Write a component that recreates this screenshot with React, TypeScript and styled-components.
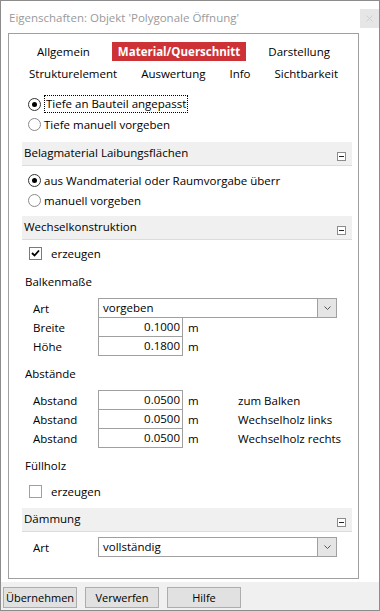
import React from "react";
import styled, { createGlobalStyle } from "styled-components";

const GlobalStyle = createGlobalStyle`
  html, body {
    margin: 0;
    padding: 0;
    background: #fff;
  }
  body {
    font-family: "Open Sans", "Noto Sans", sans-serif;
    font-size: 11.5px;
    color: #000;
  }
`;

const Window = styled.div`
  width: 380px;
  height: 611px;
  box-sizing: border-box;
  border: 1px solid #8c8c8c;
  background: #fff;
  display: flex;
  flex-direction: column;
`;

const TitleBar = styled.div`
  height: 32px;
  display: flex;
  justify-content: space-between;
  align-items: flex-start;
  padding-left: 8px;
`;

const Title = styled.div`
  color: #9a9a9a;
  font-size: 11.5px;
  line-height: 19px;
  margin-top: 7px;
`;

const CloseBtn = styled.div`
  width: 19px;
  height: 19px;
  margin-top: 8px;
  background: #e6e6e6;
  display: flex;
  align-items: center;
  justify-content: center;
`;

const Panel = styled.div`
  width: 351px;
  height: 546px;
  box-sizing: border-box;
  margin-left: 7px;
  border: 1px solid #a0a0a0;
  display: flex;
  flex-direction: column;
`;

const Tabs = styled.div`
  padding-top: 8px;
  display: flex;
  flex-direction: column;
  gap: 3px;
`;

const TabRow = styled.div<{ $gap: number }>`
  display: flex;
  justify-content: center;
  gap: ${(p) => p.$gap}px;
`;

const Tab = styled.div<{ $active?: boolean }>`
  height: 19px;
  line-height: 19px;
  padding: 0 6px;
  white-space: nowrap;
  background: ${(p) => (p.$active ? "#cd3237" : "transparent")};
  color: ${(p) => (p.$active ? "#fff" : "#000")};
  font-weight: ${(p) => (p.$active ? 700 : 400)};
`;

const Content = styled.div`
  padding: 11px 6px 0 13px;
  display: flex;
  flex-direction: column;
`;

const Block = styled.div<{ $mt?: number }>`
  margin-top: ${(p) => p.$mt ?? 0}px;
  display: flex;
  flex-direction: column;
`;

const OptionRow = styled.div<{ $indent?: number; $gap?: number }>`
  height: 20px;
  display: flex;
  align-items: center;
  padding-left: ${(p) => p.$indent ?? 6}px;
  gap: ${(p) => p.$gap ?? 3}px;
  white-space: nowrap;
`;

const Radio = styled.span<{ $on?: boolean }>`
  width: 13px;
  height: 13px;
  box-sizing: border-box;
  border-radius: 50%;
  border: 1px solid ${(p) => (p.$on ? "#333" : "#8a8a8a")};
  background: #fff;
  display: flex;
  align-items: center;
  justify-content: center;
  flex-shrink: 0;
  &::after {
    content: "";
    display: ${(p) => (p.$on ? "block" : "none")};
    width: 5px;
    height: 5px;
    border-radius: 50%;
    background: #000;
  }
`;

const Focused = styled.span`
  border: 1px dotted #000;
  padding: 0 1px;
  line-height: 16px;
`;

const CheckBox = styled.span<{ $on?: boolean }>`
  width: 13px;
  height: 13px;
  box-sizing: border-box;
  border: 1px solid ${(p) => (p.$on ? "#7a7a7a" : "#a0a0a0")};
  background: #fff;
  display: flex;
  align-items: center;
  justify-content: center;
  flex-shrink: 0;
`;

const Header = styled.div<{ $mt?: number }>`
  margin-top: ${(p) => p.$mt ?? 0}px;
  height: 24px;
  box-sizing: border-box;
  background: #f0f0f0;
  border-bottom: 1px solid #dcdcdc;
  display: flex;
  justify-content: space-between;
  padding-left: 2px;
  padding-right: 6px;
`;

const HeaderText = styled.span`
  line-height: 22px;
`;

const Collapse = styled.span`
  align-self: flex-end;
  margin-bottom: 4px;
  width: 9px;
  height: 9px;
  box-sizing: border-box;
  border: 1px solid #8c8c8c;
  background: #fff;
  display: flex;
  align-items: center;
  justify-content: center;
  &::after {
    content: "";
    width: 5px;
    height: 1px;
    background: #222;
  }
`;

const Caption = styled.div<{ $mt?: number }>`
  margin-top: ${(p) => p.$mt ?? 0}px;
  height: 20px;
  line-height: 20px;
  padding-left: 3px;
`;

const FieldRow = styled.div`
  height: 20px;
  display: flex;
  align-items: center;
  & + & {
    margin-top: -1px;
  }
`;

const Label = styled.span`
  width: 76px;
  box-sizing: border-box;
  padding-left: 11px;
`;

const NumBox = styled.div`
  width: 85px;
  height: 20px;
  box-sizing: border-box;
  border: 1px solid #a0a0a0;
  background: #fff;
  text-align: right;
  padding-right: 2px;
  line-height: 18px;
`;

const Unit = styled.span`
  width: 55px;
  box-sizing: border-box;
  padding-left: 5px;
`;

const Note = styled.span`
  white-space: nowrap;
`;

const Select = styled.div`
  width: 239px;
  height: 20px;
  box-sizing: border-box;
  border: 1px solid #a0a0a0;
  background: #fff;
  display: flex;
`;

const SelectText = styled.span`
  flex: 1;
  padding-left: 4px;
  line-height: 18px;
`;

const SelectArrow = styled.span`
  width: 18px;
  background: #e5e5e5;
  border-left: 1px solid #a0a0a0;
  display: flex;
  align-items: center;
  justify-content: center;
`;

const Spacer = styled.div`
  height: 3px;
`;

const ButtonBar = styled.div`
  flex: 1;
  background: #f0f0f0;
  display: flex;
  align-items: flex-start;
  padding: 5px 0 0 2px;
  gap: 8px;
`;

const Button = styled.div`
  width: 74px;
  height: 21px;
  box-sizing: border-box;
  border: 1px solid #adadad;
  background: #e1e1e1;
  text-align: center;
  font-size: 11px;
  line-height: 19px;
  white-space: nowrap;
`;

const Chevron = () => (
  <svg width="7" height="4" viewBox="0 0 7 4">
    <path d="M0.5 0.5 L3.5 3.5 L6.5 0.5" fill="none" stroke="#555" strokeWidth="1" />
  </svg>
);

const Check = () => (
  <svg width="9" height="8" viewBox="0 0 9 8">
    <path d="M1 4 L3.5 6.5 L8 1.5" fill="none" stroke="#000" strokeWidth="1.8" />
  </svg>
);

const Dropdown = ({ value }: { value: string }) => (
  <Select>
    <SelectText>{value}</SelectText>
    <SelectArrow>
      <Chevron />
    </SelectArrow>
  </Select>
);

const abstaende = [
  { value: "0.0500", note: "zum Balken" },
  { value: "0.0500", note: "Wechselholz links" },
  { value: "0.0500", note: "Wechselholz rechts" },
];

export default function App() {
  return (
    <>
      <GlobalStyle />
      <Window>
        <TitleBar>
          <Title>Eigenschaften: Objekt 'Polygonale Öffnung'</Title>
          <CloseBtn>
            <svg width="7" height="7" viewBox="0 0 7 7">
              <path d="M0.5 0.5 L6.5 6.5 M6.5 0.5 L0.5 6.5" stroke="#cfcfcf" strokeWidth="1" />
            </svg>
          </CloseBtn>
        </TitleBar>
        <Panel>
          <Tabs>
            <TabRow $gap={16}>
              <Tab>Allgemein</Tab>
              <Tab $active>Material/Querschnitt</Tab>
              <Tab>Darstellung</Tab>
            </TabRow>
            <TabRow $gap={12}>
              <Tab>Strukturelement</Tab>
              <Tab>Auswertung</Tab>
              <Tab>Info</Tab>
              <Tab>Sichtbarkeit</Tab>
            </TabRow>
          </Tabs>
          <Content>
            <Block>
              <OptionRow>
                <Radio $on />
                <Focused>Tiefe an Bauteil angepasst</Focused>
              </OptionRow>
              <OptionRow>
                <Radio />
                <span>Tiefe manuell vorgeben</span>
              </OptionRow>
            </Block>

            <Header $mt={8}>
              <HeaderText>Belagmaterial Laibungsflächen</HeaderText>
              <Collapse />
            </Header>
            <Block $mt={4}>
              <OptionRow>
                <Radio $on />
                <span>aus Wandmaterial oder Raumvorgabe überr</span>
              </OptionRow>
              <OptionRow>
                <Radio />
                <span>manuell vorgeben</span>
              </OptionRow>
            </Block>

            <Header $mt={6}>
              <HeaderText>Wechselkonstruktion</HeaderText>
              <Collapse />
            </Header>
            <Block $mt={3}>
              <OptionRow $indent={7} $gap={9}>
                <CheckBox $on>
                  <Check />
                </CheckBox>
                <span>erzeugen</span>
              </OptionRow>
            </Block>

            <Caption $mt={9}>Balkenmaße</Caption>
            <Block $mt={6}>
              <FieldRow>
                <Label>Art</Label>
                <Dropdown value="vorgeben" />
              </FieldRow>
              <FieldRow>
                <Label>Breite</Label>
                <NumBox>0.1000</NumBox>
                <Unit>m</Unit>
              </FieldRow>
              <FieldRow>
                <Label>Höhe</Label>
                <NumBox>0.1800</NumBox>
                <Unit>m</Unit>
              </FieldRow>
            </Block>

            <Caption $mt={8}>Abstände</Caption>
            <Block $mt={6}>
              {abstaende.map((a) => (
                <FieldRow key={a.note}>
                  <Label>Abstand</Label>
                  <NumBox>{a.value}</NumBox>
                  <Unit>m</Unit>
                  <Note>{a.note}</Note>
                </FieldRow>
              ))}
            </Block>

            <Caption $mt={8}>Füllholz</Caption>
            <Block $mt={5}>
              <OptionRow $indent={7} $gap={9}>
                <CheckBox />
                <span>erzeugen</span>
              </OptionRow>
            </Block>

            <Header $mt={7}>
              <HeaderText>Dämmung</HeaderText>
              <Collapse />
            </Header>
            <Block $mt={5}>
              <FieldRow>
                <Label>Art</Label>
                <Dropdown value="vollständig" />
              </FieldRow>
            </Block>
          </Content>
        </Panel>
        <Spacer />
        <ButtonBar>
          <Button>Übernehmen</Button>
          <Button>Verwerfen</Button>
          <Button>Hilfe</Button>
        </ButtonBar>
      </Window>
    </>
  );
}
